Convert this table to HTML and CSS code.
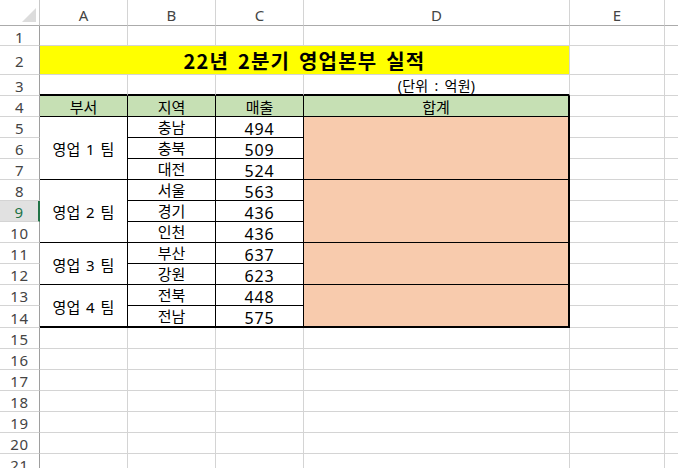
FILE: index.html
```html
<!DOCTYPE html>
<html lang="ko">
<head>
<meta charset="utf-8">
<title>22년 2분기 영업본부 실적</title>
<link rel="stylesheet" href="styles.css">
</head>
<body>
<div class="sheet">
  <!-- column headers -->
  <div class="c corner"><svg class="tri" width="16" height="16" viewBox="0 0 16 16"><polygon points="1,15 15,15 15,1" fill="#dcdcdc"/></svg></div>
  <div class="c ch">A</div><div class="c ch">B</div><div class="c ch">C</div><div class="c ch">D</div><div class="c ch">E</div><div class="c ch"></div>

  <!-- row 1 -->
  <div class="c rh">1</div><div class="c"></div><div class="c"></div><div class="c"></div><div class="c"></div><div class="c"></div><div class="c"></div>

  <!-- row 2 -->
  <div class="c rh">2</div><div class="c title">22년 2분기 영업본부 실적</div><div class="c"></div><div class="c"></div>

  <!-- row 3 -->
  <div class="c rh">3</div><div class="c top"></div><div class="c top"></div><div class="c top"></div><div class="c top unit">(단위 : 억원)</div><div class="c"></div><div class="c"></div>

  <!-- row 4 -->
  <div class="c rh">4</div><div class="c t th">부서</div><div class="c t th">지역</div><div class="c t th">매출</div><div class="c t th dr">합계</div><div class="c"></div><div class="c"></div>

  <!-- row 5 -->
  <div class="c rh">5</div><div class="c t span3">영업 1 팀</div><div class="c t">충남</div><div class="c t num">494</div><div class="c t sum span3"></div><div class="c"></div><div class="c"></div>
  <div class="c rh">6</div><div class="c t">충북</div><div class="c t num">509</div><div class="c"></div><div class="c"></div>
  <div class="c rh">7</div><div class="c t">대전</div><div class="c t num">524</div><div class="c"></div><div class="c"></div>

  <!-- row 8 -->
  <div class="c rh">8</div><div class="c t span3">영업 2 팀</div><div class="c t">서울</div><div class="c t num">563</div><div class="c t sum span3"></div><div class="c"></div><div class="c"></div>
  <div class="c rh sel">9</div><div class="c t">경기</div><div class="c t num">436</div><div class="c"></div><div class="c"></div>
  <div class="c rh">10</div><div class="c t">인천</div><div class="c t num">436</div><div class="c"></div><div class="c"></div>

  <!-- row 11 -->
  <div class="c rh">11</div><div class="c t span2">영업 3 팀</div><div class="c t">부산</div><div class="c t num">637</div><div class="c t sum span2"></div><div class="c"></div><div class="c"></div>
  <div class="c rh">12</div><div class="c t">강원</div><div class="c t num">623</div><div class="c"></div><div class="c"></div>

  <!-- row 13 -->
  <div class="c rh">13</div><div class="c t span2 bot">영업 4 팀</div><div class="c t">전북</div><div class="c t num">448</div><div class="c t sum span2 bot"></div><div class="c"></div><div class="c"></div>
  <div class="c rh">14</div><div class="c t bot">전남</div><div class="c t num bot">575</div><div class="c"></div><div class="c"></div>

  <!-- empty rows -->
  <div class="c rh">15</div><div class="c"></div><div class="c"></div><div class="c"></div><div class="c"></div><div class="c"></div><div class="c"></div>
  <div class="c rh">16</div><div class="c"></div><div class="c"></div><div class="c"></div><div class="c"></div><div class="c"></div><div class="c"></div>
  <div class="c rh">17</div><div class="c"></div><div class="c"></div><div class="c"></div><div class="c"></div><div class="c"></div><div class="c"></div>
  <div class="c rh">18</div><div class="c"></div><div class="c"></div><div class="c"></div><div class="c"></div><div class="c"></div><div class="c"></div>
  <div class="c rh">19</div><div class="c"></div><div class="c"></div><div class="c"></div><div class="c"></div><div class="c"></div><div class="c"></div>
  <div class="c rh">20</div><div class="c"></div><div class="c"></div><div class="c"></div><div class="c"></div><div class="c"></div><div class="c"></div>
  <div class="c rh">21</div><div class="c"></div><div class="c"></div><div class="c"></div><div class="c"></div><div class="c"></div><div class="c"></div>
</div>
</body>
</html>
```
FILE: styles.css
```css
html, body {
  margin: 0;
  padding: 0;
  background: #ffffff;
  overflow: hidden;
  width: 678px;
  height: 468px;
}

.sheet {
  display: grid;
  grid-template-columns: 40px 88px 88px 88px 266px 95px 14px;
  grid-template-rows: 26px 20px 29px 21px 21px repeat(9, 21px) 22px repeat(7, 21px);
  font-family: "Noto Sans", "Noto Sans CJK KR", sans-serif;
  font-size: 15px;
  word-spacing: 2px;
  color: #000;
}

.c {
  box-sizing: border-box;
  border-right: 1px solid #d4d4d4;
  border-bottom: 1px solid #d4d4d4;
  display: flex;
  align-items: center;
  justify-content: center;
  overflow: hidden;
  white-space: nowrap;
  line-height: 1;
  padding-top: 1px;
}

.corner {
  border-right-color: #c8c8c8;
  border-bottom-color: #ababab;
  justify-content: flex-end;
  align-items: flex-end;
  padding: 0 2px 2px 0;
}

.tri {
  display: block;
}

.ch {
  border-bottom-color: #ababab;
  color: #444;
  font-size: 15px;
  padding-top: 5px;
}

.rh {
  border-right-color: #9e9e9e;
  color: #444;
  font-size: 15px;
  letter-spacing: 0.6px;
  padding-top: 3px;
}

.rh.sel {
  background: #e1e1e1;
  color: #217346;
  border-right: 2px solid #217346;
}

.title {
  grid-column: span 4;
  background: #ffff00;
  font-family: "Noto Sans CJK KR", sans-serif;
  font-weight: 700;
  font-size: 20px;
  letter-spacing: 1.2px;
  word-spacing: 2px;
}

.top {
  border-bottom: 2px solid #000;
}

.unit {
  font-size: 14px;
  letter-spacing: 0.3px;
  padding-top: 2px;
}

.t {
  border-right-color: #000;
  border-bottom-color: #000;
}

.th {
  background: #c6e0b4;
  padding-top: 3px;
}

.dr {
  border-right: 2px solid #000;
}

.num {
  font-size: 16px;
  letter-spacing: 0.8px;
  padding-top: 3px;
}

.sum {
  background: #f8cbad;
  border-right: 2px solid #000;
}

.span3 {
  grid-row: span 3;
  padding-top: 3px;
}

.span2 {
  grid-row: span 2;
  padding-top: 3px;
}

.bot {
  border-bottom: 2px solid #000;
}
```
